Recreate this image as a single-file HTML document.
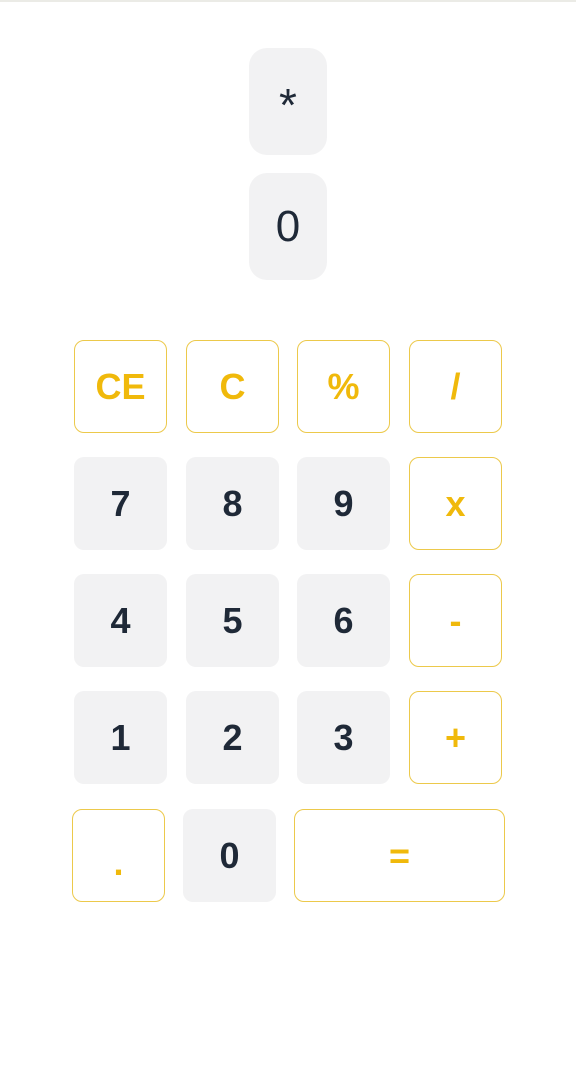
<!DOCTYPE html>
<html><head><style>
body{margin:0;width:576px;height:1072px;background:#fff;font-family:"Liberation Sans",sans-serif;position:relative;overflow:hidden}
.top{position:absolute;left:0;top:0;width:576px;height:2px;background:#ebebe6}
.d{position:absolute;left:249px;width:78px;height:107px;background:#f2f2f3;border-radius:18px;color:#1f2937;display:flex;align-items:center;justify-content:center;font-size:44px}
.b{position:absolute;box-sizing:border-box;width:93px;height:93px;border-radius:10px;display:flex;align-items:center;justify-content:center;font-size:36px;font-weight:bold}
.n{background:#f2f2f3;color:#1f2937}
.o{border:1px solid #ecc94b;color:#f0b90b;background:#fff}
</style></head><body>
<div class="top"></div>
<div class="d" style="top:48px;font-size:46px;padding-top:6px;box-sizing:border-box">*</div>
<div class="d" style="top:173px">0</div>

<div class="b o" style="left:74px;top:340px">CE</div>
<div class="b o" style="left:186px;top:340px">C</div>
<div class="b o" style="left:297px;top:340px">%</div>
<div class="b o" style="left:409px;top:340px">/</div>

<div class="b n" style="left:74px;top:457px">7</div>
<div class="b n" style="left:186px;top:457px">8</div>
<div class="b n" style="left:297px;top:457px">9</div>
<div class="b o" style="left:409px;top:457px">x</div>

<div class="b n" style="left:74px;top:574px">4</div>
<div class="b n" style="left:186px;top:574px">5</div>
<div class="b n" style="left:297px;top:574px">6</div>
<div class="b o" style="left:409px;top:574px">-</div>

<div class="b n" style="left:74px;top:691px">1</div>
<div class="b n" style="left:186px;top:691px">2</div>
<div class="b n" style="left:297px;top:691px">3</div>
<div class="b o" style="left:409px;top:691px">+</div>

<div class="b o" style="left:72px;top:809px;padding-top:14px">.</div>
<div class="b n" style="left:183px;top:809px">0</div>
<div class="b o" style="left:294px;top:809px;width:211px">=</div>
</body></html>
